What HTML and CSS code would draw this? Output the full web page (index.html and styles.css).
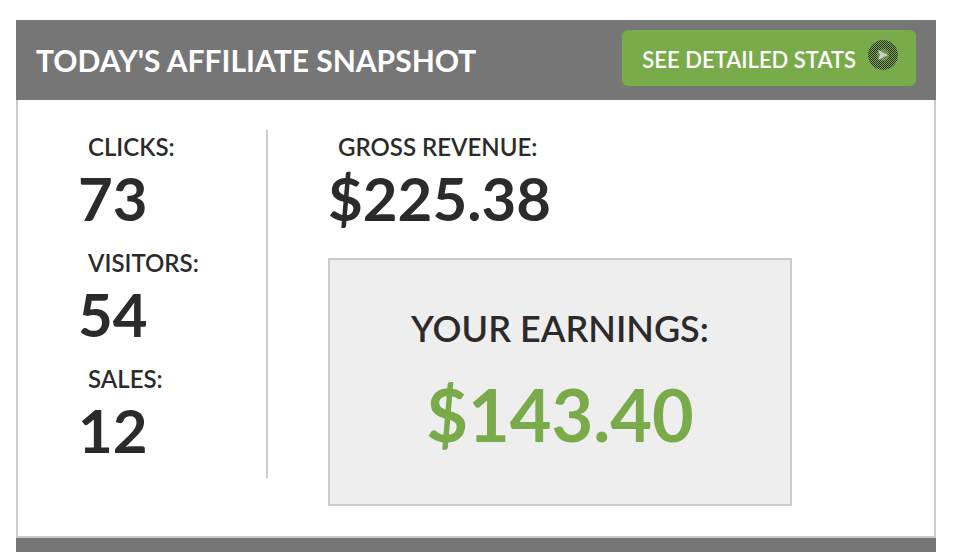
FILE: index.html
```html
<!DOCTYPE html>
<html lang="en">
<head>
    <meta charset="UTF-8">
    <meta name="viewport" content="width=device-width, initial-scale=1.0">
    <title>Affiliate Snapshot</title>
    <link rel="stylesheet" href="styles.css">
</head>
<body>
    <section class="snapshot">
        <header class="snapshot-header">
            <h2>Today's Affiliate Snapshot</h2>
            <a class="stats-button" href="#">
                See Detailed Stats
                <svg class="stats-icon" viewBox="0 0 30 30" aria-hidden="true">
                    <defs>
                        <pattern id="dots" width="2" height="2" patternUnits="userSpaceOnUse">
                            <path d="M0 0h1v1H0zM1 1h1v1H1z" fill="#2b2b2b" shape-rendering="crispEdges"/>
                        </pattern>
                    </defs>
                    <circle cx="15" cy="15" r="15" fill="url(#dots)"/>
                    <circle cx="15" cy="15" r="6" fill="#7aab4a"/>
                    <circle cx="15" cy="15" r="6" fill="url(#dots)" opacity="0.4"/>
                    <path d="M10 10l10 5-10 5 2-5z" fill="#ccc"/>
                </svg>
            </a>
        </header>
        <div class="snapshot-body">
            <dl class="counts">
                <div class="stat">
                    <dt>Clicks:</dt>
                    <dd>73</dd>
                </div>
                <div class="stat">
                    <dt>Visitors:</dt>
                    <dd>54</dd>
                </div>
                <div class="stat">
                    <dt>Sales:</dt>
                    <dd>12</dd>
                </div>
            </dl>
            <dl class="money">
                <div class="stat">
                    <dt>Gross Revenue:</dt>
                    <dd>$225.38</dd>
                </div>
                <div class="earnings">
                    <dt>Your Earnings:</dt>
                    <dd>$143.40</dd>
                </div>
            </dl>
        </div>
    </section>
    <div class="next-header"></div>
</body>
</html>
```
FILE: styles.css
```css
*{
    margin: 0;
    padding: 0;
    box-sizing: border-box;
}
body{
    padding: 20px 20px 0 16px;
    background-color: #fff;
    color: #2b2b2b;
    font-family: Lato, sans-serif;
    font-weight: 600;
    text-transform: uppercase;
}

.snapshot-header{
    display: flex;
    justify-content: space-between;
    align-items: flex-start;
    min-height: 80px;
    padding: 10px 20px;
    background-color: #767676;
    color: #fff;
}
.snapshot-header h2{
    font-size: 30px;
    line-height: 60px;
    font-weight: bold;
}
.stats-button{
    display: flex;
    align-items: flex-start;
    gap: 12px;
    height: 56px;
    padding: 10px 18px 0 20px;
    border-radius: 6px;
    background-color: #7aab4a;
    color: #fff;
    font-size: 22px;
    line-height: 40px;
    text-decoration: none;
}
.stats-icon{
    width: 30px;
    height: 30px;
}

.snapshot-body{
    display: flex;
    align-items: flex-start;
    gap: 60px;
    padding: 30px 60px;
    border: 2px solid #cbccc7;
    border-top: none;
}
.counts{
    width: 190px;
    border-right: 2px solid #cbccc7;
}
.stat{
    height: 116px;
}
.stat dt{
    padding-left: 10px;
    font-size: 24px;
    line-height: 34px;
}
.stat dd{
    font-size: 60px;
    line-height: 68px;
    font-weight: bold;
}

.money .stat{
    height: 128px;
}
.earnings{
    width: 464px;
    height: 248px;
    padding: 44px 20px;
    border: 2px solid #cbccc7;
    background-color: #eee;
    text-align: center;
}
.earnings dt{
    font-size: 36px;
    line-height: 48px;
}
.earnings dd{
    margin-top: 22px;
    color: #7aab4a;
    font-size: 72px;
    line-height: 80px;
    font-weight: bold;
}

.next-header{
    height: 14px;
    background-color: #767676;
}
```
